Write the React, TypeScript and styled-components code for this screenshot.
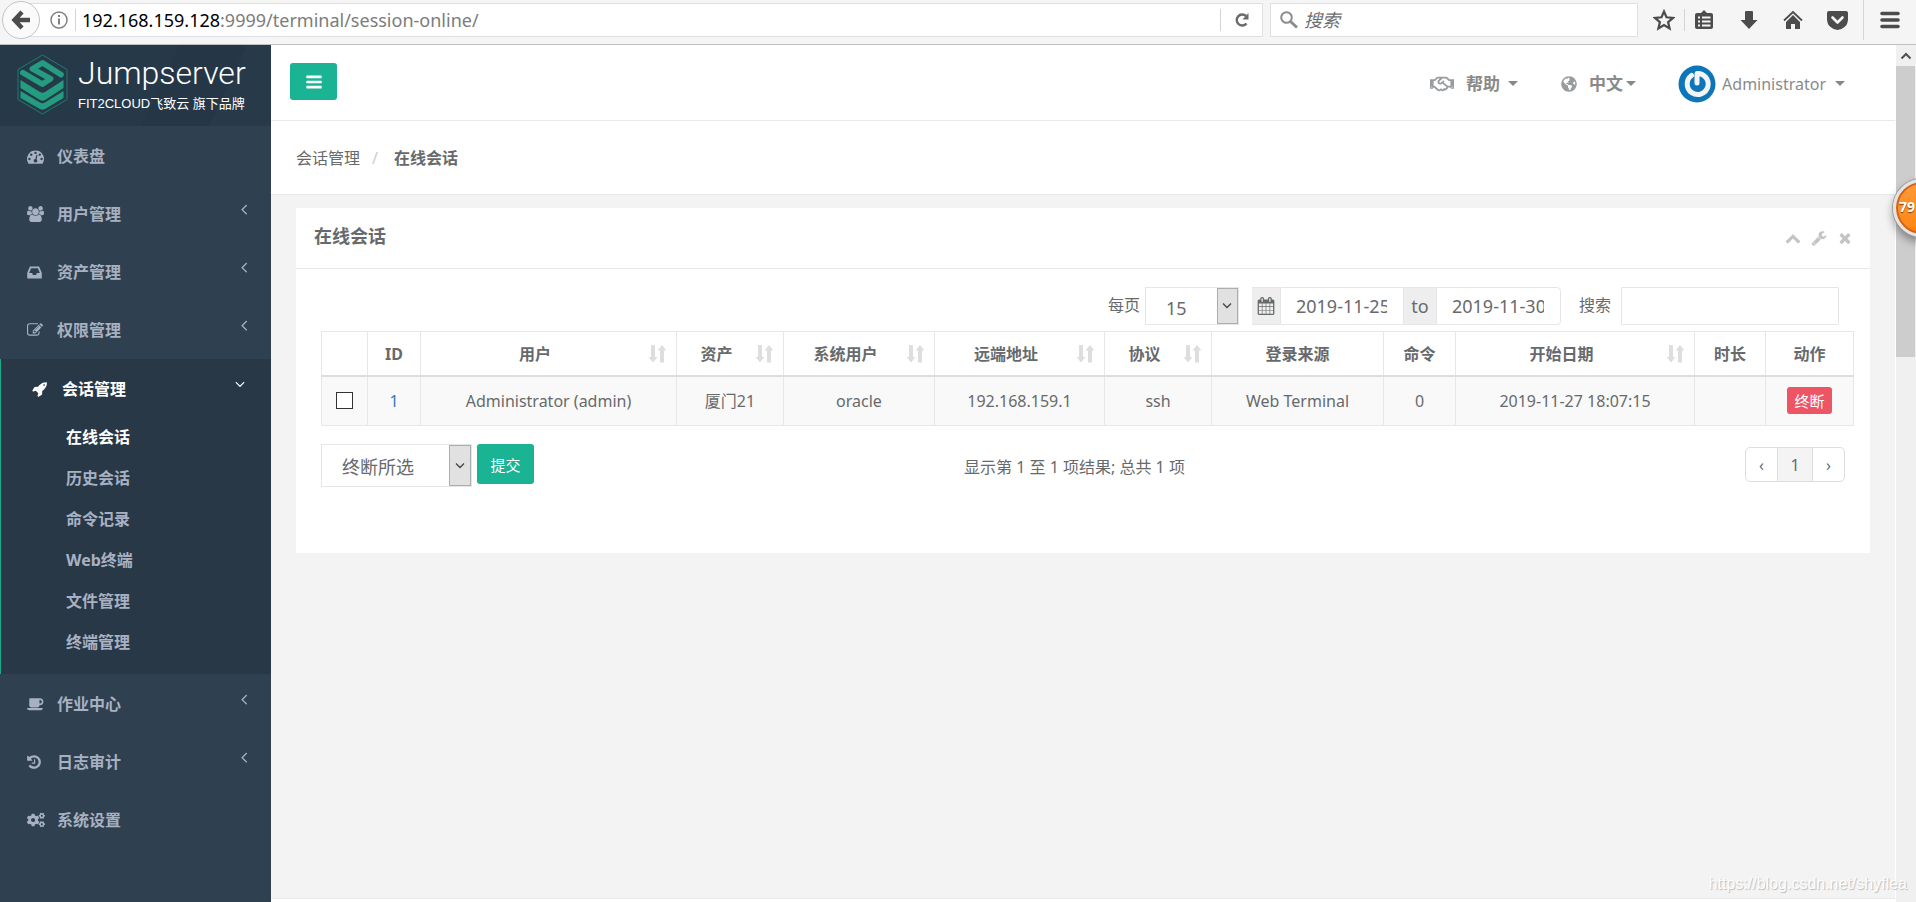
import React from "react";
import styled, { createGlobalStyle, css } from "styled-components";
import { FaCogs, FaRegHandshake, FaGlobeAmericas } from "react-icons/fa";

const sans = `"Noto Sans", "Noto Sans CJK SC", sans-serif`;

const GlobalStyle = createGlobalStyle`
  *, *::before, *::after { box-sizing: border-box; }
  body {
    margin: 0;
    font-family: ${sans};
    font-size: 16px;
    line-height: 24px;
    color: #676a6c;
    background: #f3f3f3;
  }
  button, input, select { font-family: inherit; color: inherit; margin: 0; }
  a { color: inherit; text-decoration: none; }
  ul { list-style: none; margin: 0; padding: 0; }
`;

/* ---------- icons ---------- */

const glyphs: Record<string, string> = {
  bars: "M1664 1344v128q0 26-19 45t-45 19h-1408q-26 0-45-19t-19-45v-128q0-26 19-45t45-19h1408q26 0 45 19t19 45zm0-512v128q0 26-19 45t-45 19h-1408q-26 0-45-19t-19-45v-128q0-26 19-45t45-19h1408q26 0 45 19t19 45zm0-512v128q0 26-19 45t-45 19h-1408q-26 0-45-19t-19-45v-128q0-26 19-45t45-19h1408q26 0 45 19t19 45z",
  inbox: "M1151 960h316q-1-3-2.5-8t-2.5-8l-212-496h-708l-212 496q-1 2-2.5 8t-2.5 8h316l95 192h320zm513 30v482q0 26-19 45t-45 19h-1408q-26 0-45-19t-19-45v-482q0-62 25-123l238-552q10-25 36.5-42t52.5-17h832q26 0 52.5 17t36.5 42l238 552q25 61 25 123z",
  edit: "M888 1184l116-116-152-152-116 116v56h96v96h56zm440-720q-16-16-33 1l-350 350q-17 17-1 33t33-1l350-350q17-17 1-33zm80 594v190q0 119-84.5 203.5t-203.5 84.5h-832q-119 0-203.5-84.5t-84.5-203.5v-832q0-119 84.5-203.5t203.5-84.5h832q63 0 117 25 15 7 18 23 3 17-9 29l-49 49q-14 14-32 8-23-6-45-6h-832q-66 0-113 47t-47 113v832q0 66 47 113t113 47h832q66 0 113-47t47-113v-126q0-13 9-22l64-64q15-15 35-7t20 29zm-96-738l288 288-672 672h-288v-288zm444 132l-92 92-288-288 92-92q28-28 68-28t68 28l152 152q28 28 28 68t-28 68z",
  rocket: "M1440 448q0-40-28-68t-68-28-68 28-28 68 28 68 68 28 68-28 28-68zm224-288q0 249-75.5 430.5t-253.5 360.5q-81 80-195 176l-20 379q-2 16-16 26l-384 224q-7 4-16 4-12 0-23-9l-64-64q-13-14-8-32l85-276-281-281-276 85q-3 1-9 1-14 0-23-9l-64-64q-17-19-5-39l224-384q10-14 26-16l379-20q96-114 176-195 188-187 358-258t431-71q14 0 24 9.5t10 22.5z",
  coffee: "M1664 640q0-80-56-136t-136-56h-64v384h64q80 0 136-56t56-136zm-1664 704h1792q0 106-75 181t-181 75h-1280q-106 0-181-75t-75-181zm1856-704q0 159-112.5 271.5t-271.5 112.5h-64v32q0 92-66 158t-158 66h-704q-92 0-158-66t-66-158v-736q0-26 19-45t45-19h1152q159 0 271.5 112.5t112.5 271.5z",
  history: "M1664 896q0 156-61 298t-164 245-245 164-298 61q-172 0-327-72.5t-264-204.5q-7-10-6.5-22.5t8.5-20.5l137-138q10-9 25-9 16 2 23 12 73 95 179 147t225 52q104 0 198.5-40.5t163.5-109.5 109.5-163.5 40.5-198.5-40.5-198.5-109.5-163.5-163.5-109.5-198.5-40.5q-98 0-188 35.5t-160 101.5l137 138q31 30 14 69-17 40-59 40h-448q-26 0-45-19t-19-45v-448q0-42 40-59 39-17 69 14l130 129q107-101 244.5-156.5t284.5-55.5q156 0 298 61t245 164 164 245 61 298zm-640-288v448q0 14-9 23t-23 9h-320q-14 0-23-9t-9-23v-64q0-14 9-23t23-9h224v-352q0-14 9-23t23-9h64q14 0 23 9t9 23z",
  dashboard: "M384 1152q0-53-37.5-90.5t-90.5-37.5-90.5 37.5-37.5 90.5 37.5 90.5 90.5 37.5 90.5-37.5 37.5-90.5zm192-448q0-53-37.5-90.5t-90.5-37.5-90.5 37.5-37.5 90.5 37.5 90.5 90.5 37.5 90.5-37.5 37.5-90.5zm428 481l101-382q6-26-7.5-48.5t-38.5-29.5-48 6.5-30 39.5l-101 382q-60 5-107 43.5t-63 98.5q-20 77 20 146t117 89 146-20 89-117q16-60-6-117t-72-91zm660-33q0-53-37.5-90.5t-90.5-37.5-90.5 37.5-37.5 90.5 37.5 90.5 90.5 37.5 90.5-37.5 37.5-90.5zm-640-640q0-53-37.5-90.5t-90.5-37.5-90.5 37.5-37.5 90.5 37.5 90.5 90.5 37.5 90.5-37.5 37.5-90.5zm448 192q0-53-37.5-90.5t-90.5-37.5-90.5 37.5-37.5 90.5 37.5 90.5 90.5 37.5 90.5-37.5 37.5-90.5zm320 448q0 261-141 483-19 29-54 29h-1402q-35 0-54-29-141-221-141-483 0-182 71-348t191-286 286-191 348-71 348 71 286 191 191 286 71 348z",
  users: "M529 896q-162 5-265 128h-134q-82 0-138-40.5t-56-118.5q0-353 124-353 6 0 43.5 21t97.5 42.5 119 21.5q67 0 133-23-5 37-5 66 0 139 81 256zm1071 637q0 120-73 189.5t-194 69.5h-874q-121 0-194-69.5t-73-189.5q0-53 3.5-103.5t14-109 26.5-108.5 43-97.5 62-81 85.5-53.5 111.5-20q10 0 43 21.5t73 48 107 48 135 21.5 135-21.5 107-48 73-48 43-21.5q61 0 111.5 20t85.5 53.5 62 81 43 97.5 26.5 108.5 14 109 3.5 103.5zm-1024-1277q0 106-75 181t-181 75-181-75-75-181 75-181 181-75 181 75 75 181zm704 384q0 159-112.5 271.5t-271.5 112.5-271.5-112.5-112.5-271.5 112.5-271.5 271.5-112.5 271.5 112.5 112.5 271.5zm576 225q0 78-56 118.5t-138 40.5h-134q-103-123-265-128 81-117 81-256 0-29-5-66 66 23 133 23 59 0 119-21.5t97.5-42.5 43.5-21q124 0 124 353zm-128-609q0 106-75 181t-181 75-181-75-75-181 75-181 181-75 181 75 75 181z",
  wrench: "M448 1472q0-26-19-45t-45-19-45 19-19 45 19 45 45 19 45-19 19-45zm644-420l-682 682q-37 37-90 37-52 0-91-37l-106-108q-38-36-38-90 0-53 38-91l681-681q39 98 114.5 173.5t173.5 114.5zm634-435q0 39-23 106-47 134-164.5 217.5t-258.5 83.5q-185 0-316.5-131.5t-131.5-316.5 131.5-316.5 316.5-131.5q58 0 121.5 16.5t107.5 46.5q16 11 16 28t-16 28l-293 169v224l193 107q5-3 79-48.5t135.5-81 70.5-35.5q15 0 23.5 10t8.5 25z",
  times: "M1490 1322q0 40-28 68l-136 136q-28 28-68 28t-68-28l-294-294-294 294q-28 28-68 28t-68-28l-136-136q-28-28-28-68t28-68l294-294-294-294q-28-28-28-68t28-68l136-136q28-28 68-28t68 28l294 294 294-294q28-28 68-28t68 28l136 136q28 28 28 68t-28 68l-294 294 294 294q28 28 28 68z",
  chevronUp: "M1683 1331l-166 165q-19 19-45 19t-45-19l-531-531-531 531q-19 19-45 19t-45-19l-166-165q-19-19-19-45.5t19-45.5l742-741q19-19 45-19t45 19l742 741q19 19 19 45.5t-19 45.5z",
  angleLeft: "M1203 544q0 13-10 23l-393 393 393 393q10 10 10 23t-10 23l-50 50q-10 10-23 10t-23-10l-466-466q-10-10-10-23t10-23l466-466q10-10 23-10t23 10l50 50q10 10 10 23z",
  angleDown: "M1395 736q0 13-10 23l-466 466q-10 10-23 10t-23-10l-466-466q-10-10-10-23t10-23l50-50q10-10 23-10t23 10l393 393 393-393q10-10 23-10t23 10l50 50q10 10 10 23z",
  calendar: "M192 1664h288v-288h-288v288zm352 0h320v-288h-320v288zm-352-352h288v-320h-288v320zm352 0h320v-320h-320v320zm-352-384h288v-288h-288v288zm736 736h320v-288h-320v288zm-384-736h320v-288h-320v288zm768 736h288v-288h-288v288zm-384-352h320v-320h-320v320zm-352-864v-288q0-13-9.5-22.5t-22.5-9.5h-64q-13 0-22.5 9.5t-9.5 22.5v288q0 13 9.5 22.5t22.5 9.5h64q13 0 22.5-9.5t9.5-22.5zm736 864h288v-320h-288v320zm-384-384h320v-288h-320v288zm384 0h288v-288h-288v288zm32-480v-288q0-13-9.5-22.5t-22.5-9.5h-64q-13 0-22.5 9.5t-9.5 22.5v288q0 13 9.5 22.5t22.5 9.5h64q13 0 22.5-9.5t9.5-22.5zm384-64v1280q0 52-38 90t-90 38h-1408q-52 0-90-38t-38-90v-1280q0-52 38-90t90-38h128v-96q0-66 47-113t113-47h64q66 0 113 47t47 113v96h384v-96q0-66 47-113t113-47h64q66 0 113 47t47 113v96h128q52 0 90 38t38 90z",
};

/* left edge and width of the glyphs that do not sit in the 1792 square */
const boxes: Record<string, [number, number]> = {
  users: [-64, 1920],
  coffee: [0, 1920],
  inbox: [128, 1536],
  history: [128, 1536],
  rocket: [0, 1664],
  angleLeft: [512, 768],
};

const Glyph = ({ name, size = 16 }: { name: string; size?: number }) => {
  const [x, w] = boxes[name] || [0, 1792];
  return (
    <svg
      width={Math.round((size * w) / 1792)}
      height={size}
      viewBox={`${x} 0 ${w} 1792`}
      fill="currentColor"
      aria-hidden="true"
    >
      <path d={glyphs[name]} />
    </svg>
  );
};

const SortIcon = () => (
  <svg width="17" height="18" viewBox="0 0 17 18" fill="#dedede" aria-hidden="true">
    <path d="M2 0h4v12h2.500l-4.500 5.500-4.500-5.500h2.500zM11 17.500h4v-12h2.500l-4.500-5.500-4.500 5.500h2.500z" />
  </svg>
);

const ThinChevron = () => (
  <svg width="12" height="8" viewBox="0 0 12 8" fill="none" stroke="#444" strokeWidth="1.300" aria-hidden="true">
    <path d="M2 1.500l4 4 4-4" />
  </svg>
);

/* ---------- browser bar ---------- */

const Window = styled.div`
  position: relative;
  display: flex;
  flex-direction: column;
  height: 100vh;
  overflow: hidden;
`;

const BrowserBar = styled.header`
  display: flex;
  flex: none;
  height: 45px;
  padding: 3px 0 7px;
  background: #f5f5f5;
  border-bottom: 1px solid #bfbfbf;
  color: #4c4c4c;
`;

const BackButton = styled.button`
  flex: none;
  display: grid;
  place-items: center;
  width: 38px;
  height: 38px;
  margin: -2px -26px 0 2px;
  padding: 0;
  border: 1px solid #c4c4c4;
  border-radius: 50%;
  background: #fafafa;
  z-index: 1;
`;

const AddressBar = styled.div`
  display: flex;
  flex: 1;
  align-items: center;
  padding-left: 33px;
  background: #fff;
  border: 1px solid #e0e0e0;
`;

const BarRule = styled.span<{ $tall?: boolean }>`
  flex: none;
  width: 1px;
  height: ${(p) => (p.$tall ? 40 : 22)}px;
  background: #d4d4d4;
`;

const SiteInfo = styled.span`
  display: flex;
  flex: none;
  align-items: center;
  gap: 5px;
`;

const Address = styled.a`
  flex: 1;
  padding-left: 6px;
  font-size: 18px;
  color: #7c7c7c;
  b { font-weight: 400; color: #000; }
`;

const BarButton = styled.button<{ $width: number }>`
  flex: none;
  display: grid;
  place-items: center;
  width: ${(p) => p.$width}px;
  height: 34px;
  padding: 0;
  border: 0;
  background: none;
`;

const BrowserSearch = styled.label`
  display: flex;
  flex: none;
  align-items: center;
  gap: 6px;
  width: 368px;
  margin: 0 6px 0 7px;
  padding-left: 9px;
  background: #fff;
  border: 1px solid #e0e0e0;
  input {
    flex: 1;
    min-width: 0;
    padding: 0;
    border: 0;
    outline: 0;
    font-size: 18px;
    font-style: italic;
    background: none;
    &::placeholder { color: #6f6f6f; opacity: 1; }
  }
`;

const BarTools = styled.div`
  display: flex;
  flex: none;
  align-items: center;
`;

/* ---------- sidebar ---------- */

const Body = styled.div`
  display: flex;
  flex: 1;
  min-height: 0;
`;

const Sidebar = styled.nav`
  flex: none;
  width: 271px;
  background: #2f4050;
  color: #a7b1c2;
  font-weight: 700;
`;

const Brand = styled.a`
  display: flex;
  gap: 10px;
  height: 81px;
  padding: 9px 0 0 17px;
  background: linear-gradient(115deg, #263949 0 58%, #253747 58% 80%, #273a49 80%);
  color: #fff;
`;

const BrandText = styled.span`
  display: flex;
  flex-direction: column;
  font-weight: 400;
  white-space: nowrap;
  strong {
    font-family: Roboto, sans-serif;
    font-weight: 300;
    font-size: 32px;
    line-height: 38px;
  }
  small {
    font-family: "Liberation Sans", "Noto Sans CJK SC", sans-serif;
    font-size: 13px;
    line-height: 24px;
  }
`;

const NavGroup = styled.li<{ $active?: boolean }>`
  ${(p) =>
    p.$active &&
    css`
      margin-top: 1px;
      padding-bottom: 11px;
      padding-left: 4px;
      background: #293846;
      border-left: 1px solid #19aa8d;
    `}
`;

const NavLink = styled.a<{ $active?: boolean }>`
  display: flex;
  align-items: center;
  height: 58px;
  padding: 2px 23px 0 27px;
  color: ${(p) => (p.$active ? "#fff" : "inherit")};
`;

const NavIcon = styled.span`
  display: flex;
  flex: none;
  width: 30px;
`;

const NavArrow = styled.span`
  display: flex;
  margin: 0 0 11px auto;
`;

const SubLink = styled.a<{ $active?: boolean }>`
  display: block;
  height: 41px;
  padding-left: 61px;
  line-height: 41px;
  color: ${(p) => (p.$active ? "#fff" : "inherit")};
`;

/* ---------- main column ---------- */

const Main = styled.main`
  display: flex;
  flex: 1;
  flex-direction: column;
  min-width: 0;
`;

const TopBar = styled.div`
  display: flex;
  flex: none;
  align-items: center;
  height: 76px;
  padding: 0 50px 0 19px;
  background: #fff;
  border-bottom: 1px solid #e7eaec;
`;

const MenuToggle = styled.button`
  display: grid;
  place-items: center;
  width: 47px;
  height: 37px;
  margin: 0 auto 2px 0;
  padding: 0;
  border: 0;
  border-radius: 3px;
  background: #1ab394;
  color: #fff;
`;

const TopLink = styled.a<{ $gap: number; $caretGap: number; $end?: number }>`
  display: flex;
  align-items: center;
  gap: ${(p) => p.$gap}px;
  margin-right: ${(p) => p.$end || 0}px;
  padding-top: 2px;
  color: #999c9e;
  strong { font-size: 17px; font-weight: 700; color: #8a8a8a; }
  span { color: #8a8a8a; }
  i {
    width: 0;
    margin-left: ${(p) => p.$caretGap - p.$gap}px;
    border: 5px solid transparent;
    border-top-color: #888;
    border-bottom-width: 0;
  }
`;

const Breadcrumb = styled.ol`
  display: flex;
  flex: none;
  align-items: center;
  height: 74px;
  margin: 0;
  padding: 0 25px 0 25px;
  list-style: none;
  background: #fff;
  border-bottom: 1px solid #e7eaec;
  li + li::before {
    content: "/";
    padding: 0 16px 0 12px;
    color: #ccc;
    font-weight: 400;
  }
  li:last-child { font-weight: 700; }
`;

const Panel = styled.section`
  flex: none;
  height: 345px;
  margin: 13px 25px auto 25px;
  background: #fff;
`;

const PanelHead = styled.div`
  display: flex;
  align-items: center;
  height: 61px;
  padding: 0 17px 4px 18px;
  border-bottom: 1px solid #e7e7e7;
  h5 { margin: 0 auto 0 0; font-size: 18px; font-weight: 700; }
`;

const PanelTool = styled.button`
  display: flex;
  margin: 4px 0 0 10px;
  padding: 0;
  border: 0;
  background: none;
  color: #c4c4c4;
`;

const PanelBody = styled.div`
  padding: 18px 16px 0 25px;
`;

const Filters = styled.div`
  display: flex;
  justify-content: flex-end;
  height: 38px;
  margin: 0 15px 6px 0;
  line-height: 37px;
`;

const FieldLabel = styled.label<{ $after: number }>`
  margin-right: ${(p) => p.$after}px;
`;

const SelectBox = styled.span<{ $width: number; $height: number; $arrow: number }>`
  display: grid;
  grid-template-columns: 1fr ${(p) => p.$arrow}px;
  width: ${(p) => p.$width}px;
  height: ${(p) => p.$height}px;
  border: 1px solid #e5e6e7;
  background: #fff;
  select {
    grid-area: 1 / 1 / 2 / 3;
    appearance: none;
    padding: 3px 20px 0 20px;
    border: 0;
    outline: 0;
    background: none;
    font-size: 18px;
  }
  span {
    grid-area: 1 / 2 / 2 / 3;
    display: grid;
    place-items: center;
    border: 1px solid #adadad;
    background: #e1e1e1;
    pointer-events: none;
  }
`;

const DateRange = styled.span`
  display: flex;
  margin: 0 18px 0 13px;
  height: 38px;
`;

const Addon = styled.span<{ $width: number }>`
  display: grid;
  place-items: center;
  width: ${(p) => p.$width}px;
  background: #eee;
  border: 1px solid #e5e6e7;
  border-width: 1px 0;
  font-size: 18px;
`;

const TextInput = styled.input<{ $width: number; $round?: boolean }>`
  width: ${(p) => p.$width}px;
  height: 38px;
  padding: 0 16px 0 15px;
  border: 1px solid #e5e6e7;
  border-radius: ${(p) => (p.$round ? "0 4px 4px 0" : "1px")};
  outline: 0;
  background: #fff;
  font-size: 18px;
`;

const Sessions = styled.table`
  width: 100%;
  table-layout: fixed;
  border-collapse: collapse;
  text-align: center;
  th, td { border: 1px solid #e7e7e7; padding: 0; }
  th { height: 44px; padding-top: 2px; border-bottom: 2px solid #ddd; font-weight: 700; }
  td { height: 50px; background: #f9f9f9; }
`;

const HeadCell = styled.span<{ $sort?: boolean }>`
  display: flex;
  align-items: center;
  padding-right: ${(p) => (p.$sort ? 10 : 0)}px;
  svg { display: block; flex: none; }
  b { flex: 1; font-weight: inherit; }
`;

const RowLink = styled.a`
  color: #337ab7;
`;

const Check = styled.input`
  appearance: none;
  display: block;
  width: 17px;
  height: 17px;
  margin: 0 auto;
  border: 1px solid #333;
  background: #fff;
`;

const DangerButton = styled.button`
  width: 45px;
  height: 27px;
  padding: 0;
  border: 0;
  border-radius: 3px;
  background: #ed5565;
  color: #fff;
  font-size: 15px;
  line-height: 24px;
`;

const Bottom = styled.div`
  display: flex;
  align-items: flex-start;
  margin-top: 18px;
`;

const BottomPart = styled.div<{ $align: string }>`
  display: flex;
  flex: 1;
  justify-content: ${(p) => p.$align};
`;

const SubmitButton = styled.button`
  width: 57px;
  height: 40px;
  margin-left: 5px;
  padding: 0;
  border: 0;
  border-radius: 3px;
  background: #1ab394;
  color: #fff;
  font-size: 15px;
`;

const Summary = styled.p`
  margin: 11px 26px 0 0;
  white-space: nowrap;
`;

const Pager = styled.ul`
  display: flex;
  margin: 3px 9px 0 0;
  border: 1px solid #ddd;
  border-radius: 5px;
  overflow: hidden;
  a { display: block; width: 31px; height: 33px; line-height: 34px; text-align: center; }
  a[aria-current] {
    width: 36px;
    background: #f4f4f4;
    border: 1px solid #ddd;
    border-width: 0 1px;
  }
`;

const PageFoot = styled.footer`
  flex: none;
  height: 4px;
  background: #fff;
  border-top: 1px solid #e7eaec;
`;

/* ---------- scroll bar and overlays ---------- */

const ScrollTrack = styled.div`
  flex: none;
  width: 21px;
  padding-right: 1px;
  background: #f0f0f0;
  border-left: 1px solid #fff;
  span { display: grid; place-items: center; height: 21px; }
  div { height: 291px; background: #cdcdcd; }
`;

const SpeedBall = styled.div`
  position: absolute;
  top: 179px;
  right: -35px;
  width: 58px;
  height: 58px;
  padding-left: 3px;
  border: 3px solid #e4e4e4;
  border-radius: 50%;
  background: linear-gradient(#ff9a3c, #ff8410);
  box-shadow: inset 0 0 0 2px #d2641a, 0 0 0 1px #999, 0 5px 10px rgba(0, 0, 0, 0.4);
  color: #fff;
  font: 700 14px/50px "Noto Sans", sans-serif;
  text-shadow: 0 1px 1px #864000;
`;

const Watermark = styled.div`
  position: absolute;
  right: 9px;
  bottom: 8px;
  color: #fdfdfd;
  font: 16px/20px "Liberation Sans", sans-serif;
  text-shadow: 1px 1px 1px #bbb;
`;

/* ---------- data ---------- */

type NavItem = { label: string; icon: React.ReactNode; arrow?: boolean; children?: string[] };

const nav: NavItem[] = [
  { label: "仪表盘", icon: <Glyph name="dashboard" size={17} /> },
  { label: "用户管理", icon: <Glyph name="users" size={16} />, arrow: true },
  { label: "资产管理", icon: <Glyph name="inbox" size={17} />, arrow: true },
  { label: "权限管理", icon: <Glyph name="edit" size={16} />, arrow: true },
  {
    label: "会话管理",
    icon: <Glyph name="rocket" size={16} />,
    children: ["在线会话", "历史会话", "命令记录", "Web终端", "文件管理", "终端管理"],
  },
  { label: "作业中心", icon: <Glyph name="coffee" size={16} />, arrow: true },
  { label: "日志审计", icon: <Glyph name="history" size={16} />, arrow: true },
  { label: "系统设置", icon: <FaCogs size={18} /> },
];

const columns: { label: string; width: number; sort?: boolean; cell: React.ReactNode }[] = [
  { label: "", width: 46, cell: <Check type="checkbox" aria-label="选择 1" /> },
  { label: "ID", width: 53, cell: <RowLink href="#session-1">1</RowLink> },
  { label: "用户", width: 256, sort: true, cell: "Administrator (admin)" },
  { label: "资产", width: 107, sort: true, cell: "厦门21" },
  { label: "系统用户", width: 151, sort: true, cell: "oracle" },
  { label: "远端地址", width: 170, sort: true, cell: "192.168.159.1" },
  { label: "协议", width: 107, sort: true, cell: "ssh" },
  { label: "登录来源", width: 172, cell: "Web Terminal" },
  { label: "命令", width: 72, cell: "0" },
  { label: "开始日期", width: 239, sort: true, cell: "2019-11-27 18:07:15" },
  { label: "时长", width: 71, cell: "" },
  { label: "动作", width: 88, cell: <DangerButton>终断</DangerButton> },
];

const totalWidth = columns.reduce((sum, c) => sum + c.width, 0);

const Logo = () => (
  <svg width="51" height="61" viewBox="0 0 51 61" fill="#249c80" aria-hidden="true">
    <path d="M25.500 1L50 15.500v30L25.500 60 1 45.500v-30z" fill="none" stroke="#1f7c6c" strokeWidth="1" />
    <path
      d="M44 20.700L25.600 8.800 15.300 14.800 33.500 24.800 25.300 30.200 5.800 18.600"
      fill="none"
      stroke="#249c80"
      strokeWidth="5.600"
      strokeLinecap="round"
      strokeLinejoin="round"
    />
    <path d="M3.500 26l19.500 12q2.500 1.500 5 0L46.500 26v8L28 46q-2.500 1.500-5 0L3.500 34z" />
    <path d="M3.500 37l19.500 11.500q2.500 1.500 5 0L46.500 37v7L28 55q-2.500 1.500-5 0L3.500 44z" />
  </svg>
);

const Avatar = () => (
  <svg width="38" height="38" viewBox="0 0 38 38" fill="none" aria-hidden="true">
    <circle cx="19" cy="19" r="18.500" fill="#0d76b8" />
    <path d="M13.500 10.500A10.500 10.500 0 1 0 19 8.500v9.500" stroke="#f2f4f6" strokeWidth="5" strokeLinecap="round" strokeLinejoin="round" />
  </svg>
);

export default function App() {
  return (
    <>
      <GlobalStyle />
      <Window>
        <BrowserBar>
          <BackButton aria-label="后退">
            <svg width="20" height="20" viewBox="0 0 20 20" fill="none" stroke="#4c4c4c" strokeWidth="4.500" aria-hidden="true">
              <path d="M11 2L3.500 10l7.500 8M4 10h15" />
            </svg>
          </BackButton>
          <AddressBar>
            <SiteInfo>
              <BarButton $width={22} aria-label="网站信息">
                <svg width="18" height="18" viewBox="0 0 18 18" fill="none" stroke="#808080" aria-hidden="true">
                  <circle cx="9" cy="9" r="8" strokeWidth="1.500" />
                  <path d="M9 7.500v6M9 4v2" strokeWidth="2" />
                </svg>
              </BarButton>
              <BarRule />
            </SiteInfo>
            <Address href="#session-online">
              <b>192.168.159.128</b>:9999/terminal/session-online/
            </Address>
            <BarRule />
            <BarButton $width={41} aria-label="重新载入">
              <svg width="16" height="16" viewBox="0 0 16 16" fill="none" stroke="#6a6a6a" strokeWidth="2.400" aria-hidden="true">
                <path d="M12.500 11.500A5.500 5.500 0 1 1 12 4" />
                <path d="M14.500 1v6.500H8.500z" fill="#6a6a6a" stroke="none" />
              </svg>
            </BarButton>
          </AddressBar>
          <BrowserSearch>
            <svg width="18" height="18" viewBox="0 0 18 18" fill="none" stroke="#8c8c8c" aria-hidden="true">
              <circle cx="6.500" cy="6.500" r="5.300" strokeWidth="2" />
              <path d="M10.500 10.500L17 16.500" strokeWidth="3" />
            </svg>
            <input placeholder="搜索" aria-label="搜索" />
          </BrowserSearch>
          <BarTools>
            <BarButton $width={40} aria-label="收藏">
              <svg width="22" height="22" viewBox="0 0 22 22" fill="none" stroke="#4c4c4c" strokeWidth="2.200" strokeLinejoin="miter" aria-hidden="true">
                <path d="M11 2.500l2.500 5.800 6.500.6-4.900 4.200 1.500 6.400-5.600-3.400-5.600 3.400 1.500-6.400L2 8.900 8.500 8.300z" />
              </svg>
            </BarButton>
            <BarRule />
            <BarButton $width={38} aria-label="书签">
              <svg width="20" height="20" viewBox="0 0 20 20" fill="#4c4c4c" aria-hidden="true">
                <path fillRule="evenodd" d="M10 0l3 3h4q2 0 2 2v12q0 2-2 2H3q-2 0-2-2V5q0-2 2-2h4zM4 6.500v2h2v-2zM8 6.500v2h8.500v-2zM4 10.500v2h2v-2zM8 10.500v2h8.500v-2zM4 14.500v2h2v-2zM8 14.500v2h8.500v-2z" />
              </svg>
            </BarButton>
            <BarButton $width={51} aria-label="下载">
              <svg width="18" height="20" viewBox="0 0 18 20" fill="#4c4c4c" aria-hidden="true">
                <path d="M6 1h6q1 0 1 1v8h4.500L9 19 .5 10H5V2q0-1 1-1z" />
              </svg>
            </BarButton>
            <BarButton $width={38} aria-label="主页">
              <svg width="20" height="20" viewBox="0 0 20 20" fill="#4c4c4c" aria-hidden="true">
                <path d="M10 5l7 7v7h-5v-5H8v5H3v-7z" />
                <path d="M1 10.500l9-8.500 9 8.500" fill="none" stroke="#4c4c4c" strokeWidth="1.800" />
              </svg>
            </BarButton>
            <BarButton $width={51} aria-label="Pocket">
              <svg width="21" height="20" viewBox="0 0 21 20" fill="#4c4c4c" aria-hidden="true">
                <path d="M2 1h17q2 0 2 2v6q0 5-3.500 8T10.500 20 3.500 17 0 9V3q0-2 2-2z" />
                <path d="M5.500 7.500l5 5 5-5" fill="none" stroke="#f5f5f5" strokeWidth="2.600" strokeLinecap="round" strokeLinejoin="round" />
              </svg>
            </BarButton>
            <BarRule $tall />
            <BarButton $width={52} aria-label="菜单">
              <svg width="20" height="18" viewBox="0 0 20 18" stroke="#4c4c4c" strokeWidth="3.600" strokeLinecap="round" aria-hidden="true">
                <path d="M2 2.500h16M2 9h16M2 15.500h16" />
              </svg>
            </BarButton>
          </BarTools>
        </BrowserBar>

        <Body>
          <Sidebar>
            <Brand href="#home">
              <Logo />
              <BrandText>
                <strong>Jumpserver</strong>
                <small>FIT2CLOUD飞致云 旗下品牌</small>
              </BrandText>
            </Brand>
            <ul>
              {nav.map((item) => (
                <NavGroup key={item.label} $active={!!item.children}>
                  <NavLink href="#nav" $active={!!item.children}>
                    <NavIcon>{item.icon}</NavIcon>
                    {item.label}
                    {item.arrow && <NavArrow><Glyph name="angleLeft" size={18} /></NavArrow>}
                    {item.children && <NavArrow><Glyph name="angleDown" size={16} /></NavArrow>}
                  </NavLink>
                  {item.children && (
                    <ul>
                      {item.children.map((label, i) => (
                        <li key={label}>
                          <SubLink href="#nav" $active={i === 0}>{label}</SubLink>
                        </li>
                      ))}
                    </ul>
                  )}
                </NavGroup>
              ))}
            </ul>
          </Sidebar>

          <Main>
            <TopBar>
              <MenuToggle aria-label="切换菜单"><Glyph name="bars" size={18} /></MenuToggle>
              <TopLink href="#help" $gap={12} $caretGap={8} $end={43}>
                <FaRegHandshake size={24} />
                <strong>帮助</strong>
                <i />
              </TopLink>
              <TopLink href="#language" $gap={12} $caretGap={3} $end={42}>
                <FaGlobeAmericas size={16} />
                <strong>中文</strong>
                <i />
              </TopLink>
              <TopLink href="#account" $gap={6} $caretGap={9}>
                <Avatar />
                <span>Administrator</span>
                <i />
              </TopLink>
            </TopBar>
            <Breadcrumb>
              <li><a href="#sessions">会话管理</a></li>
              <li>在线会话</li>
            </Breadcrumb>

            <Panel>
              <PanelHead>
                <h5>在线会话</h5>
                <PanelTool aria-label="收起"><Glyph name="chevronUp" size={16} /></PanelTool>
                <PanelTool aria-label="设置"><Glyph name="wrench" size={16} /></PanelTool>
                <PanelTool aria-label="关闭"><Glyph name="times" size={16} /></PanelTool>
              </PanelHead>
              <PanelBody>
                <Filters>
                  <FieldLabel htmlFor="page-size" $after={5}>每页</FieldLabel>
                  <SelectBox $width={94} $height={38} $arrow={21}>
                    <select id="page-size"><option>15</option></select>
                    <span><ThinChevron /></span>
                  </SelectBox>
                  <DateRange>
                    <Addon $width={28}><Glyph name="calendar" size={18} /></Addon>
                    <TextInput $width={124} defaultValue="2019-11-25" aria-label="开始日期" />
                    <Addon $width={32}>to</Addon>
                    <TextInput $width={125} $round defaultValue="2019-11-30" aria-label="结束日期" />
                  </DateRange>
                  <FieldLabel htmlFor="search" $after={10}>搜索</FieldLabel>
                  <TextInput id="search" $width={218} />
                </Filters>

                <Sessions>
                  <colgroup>
                    {columns.map((c, i) => (
                      <col key={i} style={{ width: `${(c.width / totalWidth) * 100}%` }} />
                    ))}
                  </colgroup>
                  <thead>
                    <tr>
                      {columns.map((c, i) => (
                        <th key={i} scope="col">
                          <HeadCell $sort={c.sort}>
                            <b>{c.label}</b>
                            {c.sort && <SortIcon />}
                          </HeadCell>
                        </th>
                      ))}
                    </tr>
                  </thead>
                  <tbody>
                    <tr>
                      {columns.map((c, i) => (
                        <td key={i}>{c.cell}</td>
                      ))}
                    </tr>
                  </tbody>
                </Sessions>

                <Bottom>
                  <BottomPart $align="flex-start">
                    <SelectBox $width={151} $height={43} $arrow={22}>
                      <select aria-label="批量操作"><option>终断所选</option></select>
                      <span><ThinChevron /></span>
                    </SelectBox>
                    <SubmitButton>提交</SubmitButton>
                  </BottomPart>
                  <Summary>显示第 1 至 1 项结果; 总共 1 项</Summary>
                  <BottomPart $align="flex-end">
                    <Pager>
                      <li><a href="#prev">‹</a></li>
                      <li><a href="#page-1" aria-current="page">1</a></li>
                      <li><a href="#next">›</a></li>
                    </Pager>
                  </BottomPart>
                </Bottom>
              </PanelBody>
            </Panel>
            <PageFoot />
          </Main>

          <ScrollTrack aria-hidden="true">
            <span>
              <svg width="12" height="8" viewBox="0 0 12 8" fill="none" stroke="#505050" strokeWidth="2">
                <path d="M1.500 6.500L6 2l4.500 4.500" />
              </svg>
            </span>
            <div />
          </ScrollTrack>
        </Body>
        <SpeedBall>79</SpeedBall>
        <Watermark>https://blog.csdn.net/shyflea</Watermark>
      </Window>
    </>
  );
}
